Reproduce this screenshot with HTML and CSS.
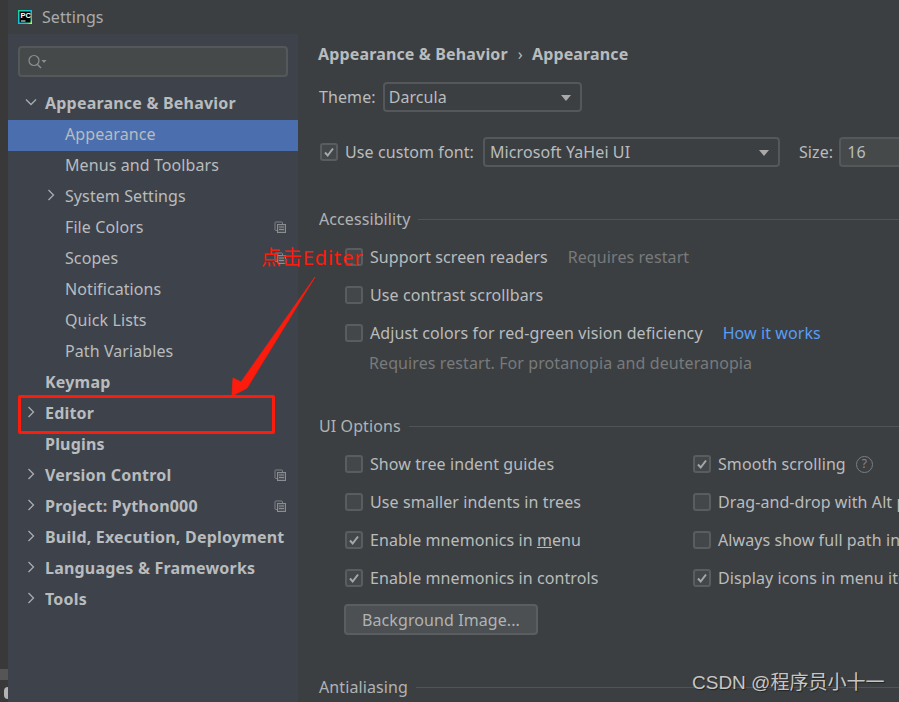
FILE: index.html
```html
<!DOCTYPE html>
<html lang="en">
<head>
<meta charset="utf-8">
<title>Settings</title>
<link rel="stylesheet" href="styles.css">
</head>
<body>
<svg class="defs" width="0" height="0" aria-hidden="true">
  <symbol id="i-right" viewBox="0 0 12 12"><path d="M3.5 1 8.5 6 3.5 11" fill="none" stroke="#a9adb0" stroke-width="1.3"/></symbol>
  <symbol id="i-down" viewBox="0 0 12 12"><path d="M1 3.5 6 8.5 11 3.5" fill="none" stroke="#a9adb0" stroke-width="1.3"/></symbol>
  <symbol id="i-copy" viewBox="0 0 12 12"><path d="M3 9.5H1.5a1 1 0 0 1-.5-.5V1.500a1 1 0 0 1 .5-.5H8a1 1 0 0 1 .5.500V3" fill="none" stroke="#7d8286"/><rect x="3.500" y="3.500" width="8" height="8" fill="#4f5357" stroke="#8a8e92"/><path d="M5 6h5M5 8.500h5" stroke="#8a8e92"/></symbol>
  <symbol id="i-check" viewBox="0 0 12 12"><path d="M2 6.500 4.700 9.500 10 2.500" fill="none" stroke="#a7a7a7" stroke-width="2"/></symbol>
</svg>
<div class="app">
  <div class="stripe">
    <div class="stripe-bar"></div>
    <div class="stripe-dot"></div>
  </div>
  <div class="window">
    <header class="titlebar">
      <svg class="logo" width="14" height="14" viewBox="0 0 14 14"><defs><linearGradient id="lg" x1="0" y1="0" x2="1" y2="1"><stop offset="0" stop-color="#21d789"/><stop offset=".55" stop-color="#07c3f2"/><stop offset=".8" stop-color="#21d789"/><stop offset="1" stop-color="#fcf84a"/></linearGradient></defs><rect width="14" height="14" fill="url(#lg)"/><rect x="1.500" y="1.500" width="11" height="11" fill="#000"/><rect x="3" y="10.500" width="4.500" height="1" fill="#fff"/><text x="2.500" y="8" class="logo-text">PC</text></svg>
      <span class="title">Settings</span>
    </header>
    <div class="content">
      <nav class="sidebar">
        <div class="search">
          <svg width="20" height="16" viewBox="0 0 20 16"><circle cx="7" cy="6.500" r="5" fill="none" stroke="#8b8f92" stroke-width="1.200"/><path d="M10.500 10.500 14 14" stroke="#8b8f92" stroke-width="1.400"/><path d="M14.500 6h5l-2.500 3z" fill="#8b8f92"/></svg>
        </div>
        <ul class="tree">
          <li class="node top"><svg class="arrow" width="12" height="12"><use href="#i-down"/></svg><span>Appearance &amp; Behavior</span></li>
          <li class="node sub selected"><span>Appearance</span></li>
          <li class="node sub"><span>Menus and Toolbars</span></li>
          <li class="node sub"><svg class="arrow" width="12" height="12"><use href="#i-right"/></svg><span>System Settings</span></li>
          <li class="node sub"><span>File Colors</span><svg class="copy" width="12" height="12"><use href="#i-copy"/></svg></li>
          <li class="node sub"><span>Scopes</span><svg class="copy" width="12" height="12"><use href="#i-copy"/></svg></li>
          <li class="node sub"><span>Notifications</span></li>
          <li class="node sub"><span>Quick Lists</span></li>
          <li class="node sub"><span>Path Variables</span></li>
          <li class="node top"><span>Keymap</span></li>
          <li class="node top"><svg class="arrow" width="12" height="12"><use href="#i-right"/></svg><span>Editor</span></li>
          <li class="node top"><span>Plugins</span></li>
          <li class="node top"><svg class="arrow" width="12" height="12"><use href="#i-right"/></svg><span>Version Control</span><svg class="copy" width="12" height="12"><use href="#i-copy"/></svg></li>
          <li class="node top"><svg class="arrow" width="12" height="12"><use href="#i-right"/></svg><span>Project: Python000</span><svg class="copy" width="12" height="12"><use href="#i-copy"/></svg></li>
          <li class="node top"><svg class="arrow" width="12" height="12"><use href="#i-right"/></svg><span>Build, Execution, Deployment</span></li>
          <li class="node top"><svg class="arrow" width="12" height="12"><use href="#i-right"/></svg><span>Languages &amp; Frameworks</span></li>
          <li class="node top"><svg class="arrow" width="12" height="12"><use href="#i-right"/></svg><span>Tools</span></li>
        </ul>
      </nav>
      <main class="main">
        <h1 class="crumbs"><span>Appearance &amp; Behavior</span><span class="crumb-sep">›</span><span>Appearance</span></h1>
        <div class="theme-row">
          <label>Theme:</label>
          <div class="combo combo-theme"><span>Darcula</span><i class="caret"></i></div>
        </div>
        <div class="font-row">
          <span class="cb on"><svg width="12" height="12"><use href="#i-check"/></svg></span>
          <label>Use custom font:</label>
          <div class="combo combo-font"><span>Microsoft YaHei UI</span><i class="caret"></i></div>
          <label class="size-label">Size:</label>
          <div class="size-input">16</div>
        </div>

        <section class="group group-a11y">
          <div class="group-title"><span>Accessibility</span></div>
          <div class="rows">
            <div class="opt"><span class="cb"></span><label>Support screen readers</label><span class="muted hint">Requires restart</span></div>
            <div class="opt"><span class="cb"></span><label>Use contrast scrollbars</label></div>
            <div class="opt"><span class="cb"></span><label>Adjust colors for red-green vision deficiency</label><a class="link">How it works</a></div>
          </div>
          <p class="muted note">Requires restart. For protanopia and deuteranopia</p>
        </section>

        <section class="group group-ui">
          <div class="group-title"><span>UI Options</span></div>
          <div class="cols">
            <div class="rows col">
              <div class="opt"><span class="cb"></span><label>Show tree indent guides</label></div>
              <div class="opt"><span class="cb"></span><label>Use smaller indents in trees</label></div>
              <div class="opt"><span class="cb on"><svg width="12" height="12"><use href="#i-check"/></svg></span><label>Enable mnemonics in <u>m</u>enu</label></div>
              <div class="opt"><span class="cb on"><svg width="12" height="12"><use href="#i-check"/></svg></span><label>Enable mnemonics in controls</label></div>
            </div>
            <div class="rows col">
              <div class="opt"><span class="cb on"><svg width="12" height="12"><use href="#i-check"/></svg></span><label>Smooth scrolling</label><span class="help">?</span></div>
              <div class="opt"><span class="cb"></span><label>Drag-and-drop with Alt pressed only</label></div>
              <div class="opt"><span class="cb"></span><label>Always show full path in window header</label></div>
              <div class="opt"><span class="cb on"><svg width="12" height="12"><use href="#i-check"/></svg></span><label>Display icons in menu items</label></div>
            </div>
          </div>
          <button class="btn">Background Image...</button>
        </section>

        <section class="group group-aa">
          <div class="group-title"><span>Antialiasing</span></div>
        </section>
      </main>
    </div>
  </div>
</div>
<div class="note-label">点击Editer</div>
<svg class="note-arrow" width="110" height="130" viewBox="0 0 110 130"><path d="M99 7 31 118 16 126 17 108 25 112z" fill="#fb1c0e" stroke="#fb1c0e" stroke-width=".8"/></svg>
<div class="note-box"></div>
<div class="watermark">CSDN @程序员小十一</div>
</body>
</html>
```
FILE: styles.css
```css
* { box-sizing: border-box; }
html, body { margin: 0; padding: 0; }
body {
  position: relative;
  width: 899px;
  height: 702px;
  overflow: hidden;
  background: #3c3f41;
  color: #b9bcbe;
  font-family: "Noto Sans", "Noto Sans CJK SC", sans-serif;
  font-size: 16px;
  letter-spacing: .09px;
}
.defs { position: absolute; }
.app { display: flex; height: 702px; }

.stripe { width: 8px; flex: none; background: #39393a; position: relative; display: flex; flex-direction: column; }
.stripe-bar { margin-top: 669px; height: 11px; background: #555; }
.stripe-dot { margin: 7px 0 0 4px; width: 4px; height: 12px; background: #b4b4b4; border-radius: 4px 0 0 4px; }

.window { flex: 1; min-width: 0; display: flex; flex-direction: column; }
.titlebar { height: 34px; flex: none; display: flex; align-items: center; padding-left: 10px; gap: 10px; background: #3c3f41; }
.title { color: #a9abad; font-size: 16px; }
.logo { flex: none; }
.logo-text { font: 700 7.500px "Liberation Sans", sans-serif; fill: #fff; letter-spacing: 0; }

.content { flex: 1; display: flex; min-height: 0; }

.sidebar { width: 290px; flex: none; background: #3e434b; padding-top: 12px; }
.search { margin-left: 10px; width: 270px; height: 31px; background: #45494a; border: 2px solid #54585a; border-radius: 4px; display: flex; align-items: center; padding-left: 7px; }
.tree { list-style: none; margin: 12px 0 0; padding: 0; }
.node { position: relative; height: 31px; display: flex; align-items: center; padding-bottom: 4px; color: #b9bcbe; white-space: nowrap; }
.node.top { padding-left: 37px; font-weight: 700; letter-spacing: .2px; }
.node.sub { padding-left: 57px; }
.node.selected { background: #4b6eaf; }
.arrow { position: absolute; top: 7px; }
.node.top .arrow { left: 17px; }
.node.sub .arrow { left: 37px; }
.copy { position: absolute; right: 12px; top: 8px; }

.main { flex: 1; min-width: 0; padding: 0 0 0 21px; background: #3c3f41; overflow: hidden; }
.crumbs { margin: 8px 0 0 -1px; height: 24px; font-size: 16px; font-weight: 700; letter-spacing: .15px; line-height: 24px; display: flex; color: #b9bcbe; white-space: nowrap; }
.crumb-sep { margin: 0 9px 0 10px; font-weight: 400; }

label { white-space: nowrap; }
.theme-row { margin-top: 16px; height: 30px; display: flex; align-items: center; gap: 7px; }
.font-row { margin-top: 25px; height: 30px; display: flex; align-items: center; white-space: nowrap; }
.font-row .cb { margin: 0 7px 0 1px; }
.font-row .combo { margin-left: 9px; }
.size-label { margin-left: 19px; }
.size-input { margin-left: 6px; flex: none; width: 120px; height: 30px; border: 2px solid #54585a; border-radius: 4px; background: #45494a; padding-left: 6px; line-height: 26px; }

.combo { position: relative; flex: none; height: 30px; border: 2px solid #54585a; border-radius: 4px; padding-left: 5px; line-height: 26px; white-space: nowrap; }
.combo-theme { width: 199px; padding-left: 4px; }
.combo-font { width: 297px; }
.caret { position: absolute; right: 9px; top: 11px; width: 0; height: 0; border-left: 5.500px solid transparent; border-right: 5.500px solid transparent; border-top: 6px solid #a9a9a9; }

.group-title { height: 24px; display: flex; align-items: center; gap: 8px; color: #b0b3b5; white-space: nowrap; }
.group-title::after { content: ""; flex: 1; height: 1px; background: #515456; }
.group-a11y { margin-top: 40px; }
.group-ui { margin-top: 36px; }
.group-aa { margin-top: 40px; }

.rows { display: flex; flex-direction: column; gap: 8px; padding-left: 26px; margin-top: 11px; }
.opt { height: 30px; display: flex; align-items: center; white-space: nowrap; }
.cb { flex: none; width: 18px; height: 18px; border: 2px solid #5a5d5f; border-radius: 3px; background: #43474a; margin-right: 7px; display: flex; align-items: center; justify-content: center; }
.muted { color: #787a7c; }
.hint { margin-left: 20px; }
.link { margin-left: 20px; color: #589df6; }
.note { margin: 0 0 0 50px; height: 30px; line-height: 30px; white-space: nowrap; }
.cols { display: flex; }
.col { padding-left: 26px; }
.col:first-child { width: 348px; flex: none; }
.help { margin-left: 10px; width: 17px; height: 17px; border: 1.500px solid #7b7e80; border-radius: 50%; color: #85888a; font-size: 12px; line-height: 14px; text-align: center; }
.btn { display: block; margin: 11px 0 0 25px; width: 194px; height: 31px; font: inherit; letter-spacing: inherit; color: #b0b3b5; background: #4c5052; border: 2px solid #5a5e60; border-radius: 4px; padding: 0; }

.note-label { position: absolute; left: 261px; top: 245px; color: #fb1c0e; font-size: 20px; line-height: 26px; letter-spacing: .9px; white-space: nowrap; }
.note-arrow { position: absolute; left: 216px; top: 270px; }
.note-box { position: absolute; left: 18px; top: 395px; width: 257px; height: 39px; border: 3px solid #fb1c0e; border-radius: 2px; }
.watermark { position: absolute; left: 692px; top: 669px; color: #c6c6c6; font-family: "Liberation Sans", "Noto Sans CJK SC", sans-serif; font-size: 19px; line-height: 28px; letter-spacing: 0; white-space: nowrap; text-shadow: 1px 1px 1px #222; }
```
